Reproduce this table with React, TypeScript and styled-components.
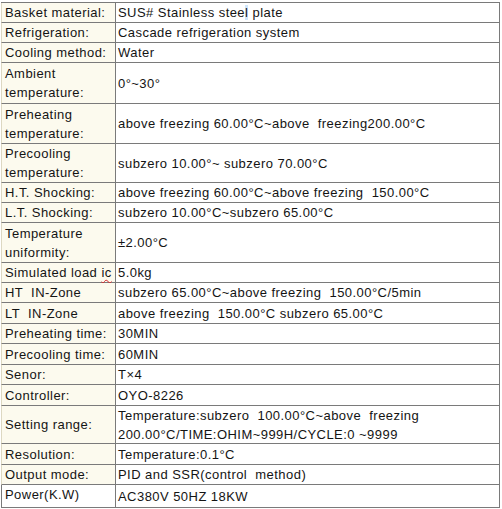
import React from "react";
import styled, { createGlobalStyle } from "styled-components";

const Global = createGlobalStyle`
  html, body { margin: 0; padding: 0; background: #ffffff; }
  body { font-family: "Liberation Sans", Arial, sans-serif; }
`;

const Sheet = styled.div`
  margin: 2px 0 0 1px;
  width: 499px;
  display: grid;
  grid-template-columns: 115px 384px;
  border-top: 1px solid #7a7a7a;
  background: #fcfaee;
  font-family: "Liberation Sans", Arial, sans-serif;
  font-size: 13px;
  letter-spacing: 0.45px;
  color: #141414;
`;

const Label = styled.div<{ $h: number; $plain?: boolean; $align?: string }>`
  box-sizing: border-box;
  height: ${(p) => p.$h}px;
  display: flex;
  align-items: ${(p) => p.$align || "center"};
  padding: 0 2px 0 3px;
  line-height: 19px;
  background: ${(p) => (p.$plain ? "#ffffff" : "#fcfaee")};
  border-left: 1px solid ${(p) => (p.$plain ? "#7a7a7a" : "#ddd8c2")};
  border-right: 1px solid #7a7a7a;
  border-bottom: 1px solid #7a7a7a;
  white-space: pre-wrap;
`;

const Value = styled.div<{ $h: number }>`
  box-sizing: border-box;
  height: ${(p) => p.$h}px;
  display: flex;
  align-items: center;
  padding: 0 2px 0 2px;
  line-height: 19px;
  background: #ffffff;
  border-right: 1px solid #7a7a7a;
  border-bottom: 1px solid #7a7a7a;
  white-space: pre-wrap;
`;

const Squiggle = styled.span`
  text-decoration: underline wavy #d9262a;
  text-decoration-thickness: 1px;
  text-underline-offset: 2px;
`;

const Picked = styled.span`
  background: #cfe6fb;
`;

type Row = {
  label: React.ReactNode;
  value: React.ReactNode;
  h: number;
  plain?: boolean;
  align?: string;
};

const rows: Row[] = [
  { label: "Basket material:", value: <>SUS# Stainless stee<Picked>l</Picked> plate</>, h: 20 },
  { label: "Refrigeration:", value: "Cascade refrigeration system", h: 20 },
  { label: "Cooling method:", value: "Water", h: 20 },
  { label: "Ambient\ntemperature:", value: "0°~30°", h: 41 },
  { label: "Preheating\ntemperature:", value: "above freezing 60.00°C~above  freezing200.00°C", h: 40 },
  { label: "Precooling\ntemperature:", value: "subzero 10.00°~ subzero 70.00°C", h: 39 },
  { label: "H.T. Shocking:", value: "above freezing 60.00°C~above freezing  150.00°C", h: 20 },
  { label: "L.T. Shocking:", value: "subzero 10.00°C~subzero 65.00°C", h: 20 },
  { label: "Temperature\nuniformity:", value: "±2.00°C", h: 40 },
  { label: <>Simulated load <Squiggle>ic</Squiggle></>, value: "5.0kg", h: 20, align: "flex-start" },
  { label: "HT  IN-Zone", value: "subzero 65.00°C~above freezing  150.00°C/5min", h: 20, align: "flex-end" },
  { label: "LT  IN-Zone", value: "above freezing  150.00°C subzero 65.00°C", h: 21, align: "flex-end" },
  { label: "Preheating time:", value: "30MIN", h: 20 },
  { label: "Precooling time:", value: "60MIN", h: 21 },
  { label: "Senor:", value: "T×4", h: 20 },
  { label: "Controller:", value: "OYO-8226", h: 21 },
  {
    label: "Setting range:",
    value: "Temperature:subzero  100.00°C~above  freezing\n200.00°C/TIME:OHIM~999H/CYCLE:0 ~9999",
    h: 38,
  },
  { label: "Resolution:", value: "Temperature:0.1°C", h: 21, align: "flex-end" },
  { label: "Output mode:", value: "PID and SSR(control  method)", h: 20 },
  { label: "Power(K.W)", value: "AC380V 50HZ 18KW", h: 23, plain: true, align: "flex-start" },
];

export default function App() {
  return (
    <>
      <Global />
      <Sheet>
        {rows.map((r, i) => (
          <React.Fragment key={i}>
            <Label $h={r.h} $plain={r.plain} $align={r.align}>
              <span>{r.label}</span>
            </Label>
            <Value $h={r.h}>
              <span>{r.value}</span>
            </Value>
          </React.Fragment>
        ))}
      </Sheet>
    </>
  );
}
